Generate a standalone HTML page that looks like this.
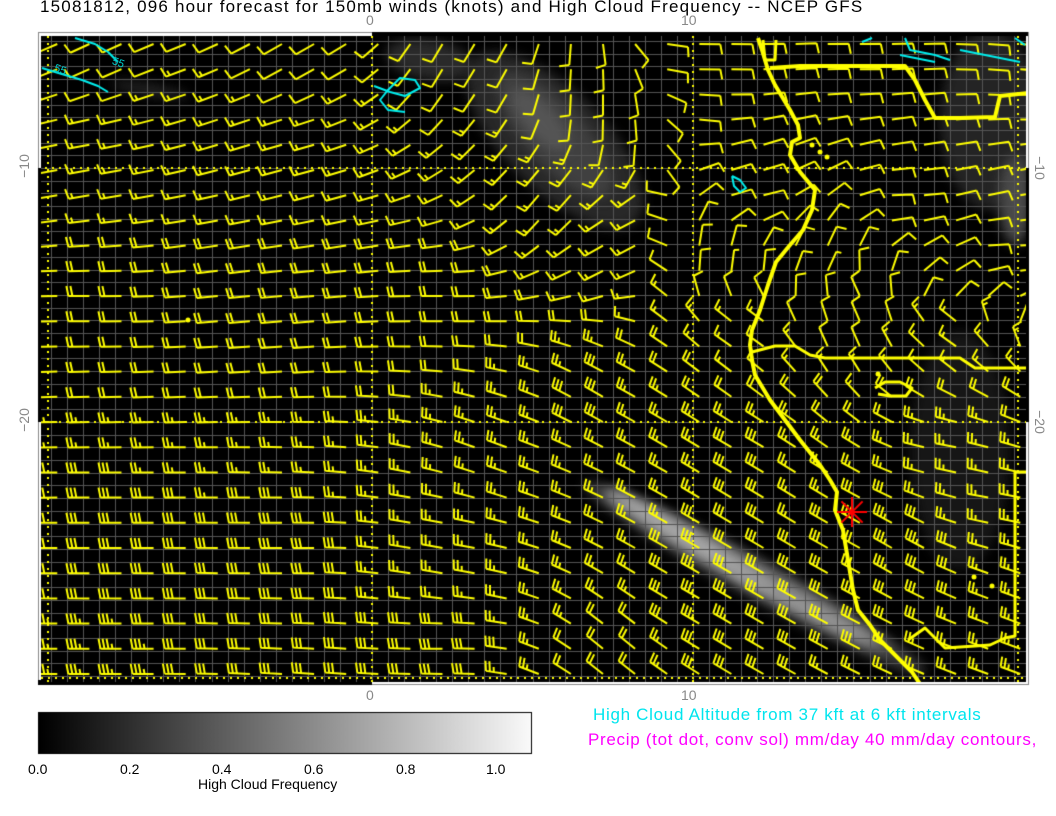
<!DOCTYPE html>
<html><head><meta charset="utf-8"><style>
html,body{margin:0;padding:0;background:#fff;}
body{width:1056px;height:816px;position:relative;overflow:hidden;font-family:"Liberation Sans",sans-serif;}
canvas{position:absolute;left:0;top:0;}
.t{position:absolute;white-space:nowrap;}
</style></head><body>
<canvas id="c" width="1056" height="816"></canvas>
<div class="t" style="left:40px;top:-3px;font-size:17px;letter-spacing:1.2px;color:#000;">15081812, 096 hour forecast for 150mb winds (knots) and High Cloud Frequency -- NCEP GFS</div>
<div class="t" style="left:366px;top:12px;font-size:14px;color:#888;">0</div>
<div class="t" style="left:681px;top:12px;font-size:14px;color:#888;">10</div>
<div class="t" style="left:366px;top:687px;font-size:14px;color:#888;">0</div>
<div class="t" style="left:681px;top:687px;font-size:14px;color:#888;">10</div>
<div class="t" style="left:12px;top:158px;font-size:14px;color:#888;transform:rotate(-90deg);transform-origin:center;">−10</div>
<div class="t" style="left:12px;top:412px;font-size:14px;color:#888;transform:rotate(-90deg);">−20</div>
<div class="t" style="left:1028px;top:160px;font-size:14px;color:#888;transform:rotate(90deg);">−10</div>
<div class="t" style="left:1028px;top:414px;font-size:14px;color:#888;transform:rotate(90deg);">−20</div>
<div class="t" style="left:54px;top:64px;font-size:11px;color:#0cc;transform:rotate(20deg);">55</div>
<div class="t" style="left:112px;top:57px;font-size:11px;color:#0cc;transform:rotate(20deg);">55</div>
<div class="t" style="left:28px;top:761px;font-size:14px;color:#000;">0.0</div>
<div class="t" style="left:120px;top:761px;font-size:14px;color:#000;">0.2</div>
<div class="t" style="left:212px;top:761px;font-size:14px;color:#000;">0.4</div>
<div class="t" style="left:304px;top:761px;font-size:14px;color:#000;">0.6</div>
<div class="t" style="left:396px;top:761px;font-size:14px;color:#000;">0.8</div>
<div class="t" style="left:486px;top:761px;font-size:14px;color:#000;">1.0</div>
<div class="t" style="left:198px;top:776px;font-size:14px;color:#000;">High Cloud Frequency</div>
<div class="t" style="left:593px;top:705px;font-size:17px;letter-spacing:0.7px;color:#00e5ee;">High Cloud Altitude from 37 kft at 6 kft intervals</div>
<div class="t" style="left:588px;top:730px;font-size:17px;letter-spacing:0.7px;color:#ff00ff;">Precip (tot dot, conv sol) mm/day 40 mm/day contours,</div>
<script>
const c=document.getElementById('c').getContext('2d');
c.fillStyle='#fff';c.fillRect(0,0,1056,816);
c.strokeStyle='#888';c.lineWidth=1;c.strokeRect(38.5,32.5,990,652);
c.fillStyle='#000';c.fillRect(41,36,985,646);
c.fillRect(372,32,321,5);c.fillRect(38,168,4,254);c.fillRect(1025,168,4,254);c.fillRect(38,680,334,5);c.fillRect(693,32,335,4);
c.save();c.beginPath();c.rect(41,36,985,646);c.clip();
c.filter='blur(6px)';
function ell(x,y,rx,ry,rot,col){c.fillStyle=col;c.beginPath();c.ellipse(x,y,rx,ry,rot*Math.PI/180,0,Math.PI*2);c.fill();}
ell(555,140,115,50,45,'#282828');ell(555,135,80,30,48,'#404040');ell(540,120,40,16,48,'#555');
ell(430,60,45,20,10,'#2a2a2a');ell(150,90,40,6,10,'#252525');
ell(990,120,50,90,0,'#242424');ell(1015,200,16,45,0,'#4a4a4a');ell(960,450,50,120,0,'#161616');
ell(755,578,195,20,29,'#3a3a3a');ell(745,570,165,13,29,'#777');ell(690,540,95,9,31,'#a8a8a8');ell(800,605,85,7,28,'#999');
c.filter='none';
c.strokeStyle='#555';c.lineWidth=1;
for(let x=372-16.05*20;x<1028;x+=16.05){if(x<41)continue;c.beginPath();c.moveTo(Math.round(x)+.5,36);c.lineTo(Math.round(x)+.5,682);c.stroke();}
for(let y=168-12.7*10;y<682;y+=12.7){if(y<36)continue;c.beginPath();c.moveTo(41,Math.round(y)+.5);c.lineTo(1026,Math.round(y)+.5);c.stroke();}
c.strokeStyle='#ff0';c.lineWidth=2;c.setLineDash([2,5]);
[[372,36,372,682],[693,36,693,682],[45,168,1026,168],[45,422,1026,422],[48,36,48,682],[1018,36,1018,682],[41,678,1026,678]].forEach(l=>{c.beginPath();c.moveTo(l[0],l[1]);c.lineTo(l[2],l[3]);c.stroke();});
c.setLineDash([]);
const A=[[100,50,155,1],[300,50,150,1],[100,150,170,1.5],[300,150,165,1.5],[100,300,180,2],[300,300,175,2],[100,550,180,3],[300,550,180,3],[100,670,180,3.5],[450,50,120,1],[600,100,90,1],[550,200,130,1.5],[450,300,180,2],[500,450,200,2.5],[600,400,210,3],[620,250,150,1.5],[700,60,0,1],[850,60,0,1],[1000,60,5,1],[750,200,-10,1],[900,200,0,1],[1000,250,0,1],[720,260,-80,0.6],[820,270,-60,0.6],[950,280,-30,1],[850,300,-120,1],[750,330,-150,1.5],[950,330,-150,1.5],[750,450,-150,3],[950,450,-170,2.5],[1000,500,-170,2.5],[900,550,-150,3.5],[700,600,-150,3.5],[620,650,-140,2],[1000,650,-160,2.5],[450,650,180,3],[450,550,190,2.5]];
c.strokeStyle='#ff0';c.lineWidth=2;c.lineCap='butt';
for(let j=0;j<26;j++){const y=44+25.2*j;
 for(let k=-17;k<=13;k++){const x=603+32.1*k;
  let sx=0,sy=0,sn=0,sw=0;
  A.forEach(a=>{const d=Math.hypot(a[0]-x,a[1]-y)+20;const w=1/(d*d*d);sx+=w*Math.cos(a[2]*Math.PI/180);sy+=w*Math.sin(a[2]*Math.PI/180);sn+=w*a[3];sw+=w;});
  const m=Math.hypot(sx,sy);const dx=sx/m,dy=sy/m;let n=sn/sw;
  const L=21,tx=x+dx*L,ty=y+dy*L;
  c.beginPath();c.moveTo(x,y);c.lineTo(tx,ty);
  const px=-dy,py=dx;let i=0;
  let full=Math.floor(n+0.25),half=(n+0.25-full)>0.5;
  if(full<1&&!half)full=1;
  for(i=0;i<full;i++){const bx=tx-dx*4*i,by=ty-dy*4*i;c.moveTo(bx,by);c.lineTo(bx+px*10+dx*2,by+py*10+dy*2);}
  if(half){const bx=tx-dx*4*i,by=ty-dy*4*i;c.moveTo(bx,by);c.lineTo(bx+px*5+dx*1,by+py*5+dy*1);}
  c.stroke();
 }}
function pl(pts,w,col){c.strokeStyle=col;c.lineWidth=w;c.lineJoin='round';c.beginPath();c.moveTo(pts[0],pts[1]);for(let i=2;i<pts.length;i+=2)c.lineTo(pts[i],pts[i+1]);c.stroke();}
pl([758,38,762,50,768,70,775,85,790,110,798,125,800,138,792,142,790,155,800,172,815,190,812,210,803,230,790,245,776,262,768,285,760,310,752,330,750,345,752,360,755,375,770,400,785,420,800,440,812,455,820,465,830,480,837,492,835,510,843,530,848,560,853,590,858,610,870,625,880,640,890,650,900,660,912,672,920,684],4,'#ff0');
pl([770,68,800,66,860,66,905,66,915,80,925,100,935,118,960,118,995,117,1000,96,1028,93],4,'#ff0');
pl([763,40,765,60,775,60,776,40],3,'#ff0');
pl([752,352,775,346,795,346,810,355,825,358,960,358,975,368,1028,368],3,'#ff0');
pl([908,640,925,628,945,648,990,645,1005,638,1015,636,1015,472,1028,472],3,'#ff0');
pl([875,388,885,382,900,382,912,388,906,396,890,396,878,394],3,'#ff0');
c.fillStyle='#ff0';[[878,374],[812,145],[820,152],[827,157],[188,320],[974,577],[992,586]].forEach(p=>{c.beginPath();c.arc(p[0],p[1],2.5,0,7);c.fill();});
pl([75,38,95,44,108,52,118,62],2,'#0ee');
pl([42,68,55,72,82,80,98,86,108,92],2,'#0ee');
pl([374,86,390,92,405,96,420,88,415,80,400,78,388,90,380,100,388,110,405,112],2,'#0ee');
pl([862,42,872,38],2,'#0ee');pl([905,38,910,50,935,55,950,60],2,'#0ee');pl([900,55,935,62],2,'#0ee');
pl([960,50,985,55,1020,62],2,'#0ee');pl([1015,38,1025,45],2,'#0ee');
pl([732,176,740,180,746,188,740,192,734,186,732,176],2,'#0ee');
c.restore();
c.strokeStyle='#f00';c.lineWidth=2;
for(let a=0;a<4;a++){const t=a*Math.PI/4;c.beginPath();c.moveTo(852-15*Math.cos(t),512-15*Math.sin(t));c.lineTo(852+15*Math.cos(t),512+15*Math.sin(t));c.stroke();}
const g=c.createLinearGradient(39,0,531,0);g.addColorStop(0,'#000');g.addColorStop(1,'#fafafa');
c.fillStyle=g;c.fillRect(39,713,492,40);c.strokeStyle='#000';c.lineWidth=1;c.strokeRect(38.5,712.5,493,41);
</script>
</body></html>
